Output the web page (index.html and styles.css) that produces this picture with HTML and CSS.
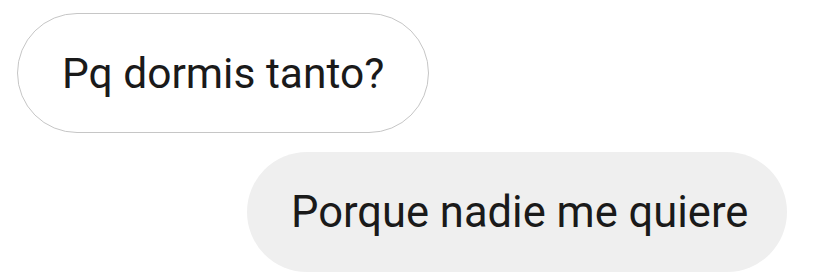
FILE: index.html
```html
<!DOCTYPE html>
<html>
<head>
  <title>Chat</title>
  <link rel="stylesheet" href="styles.css">
</head>
<body>
  <div class="chat">
    <div class="bubble received">Pq dormis tanto?</div>
    <div class="bubble sent">Porque nadie me quiere</div>
  </div>
</body>
</html>
```
FILE: styles.css
```css
body {
  margin: 0;
  background-color: #ffffff;
  font-family: Roboto, "Noto Sans", sans-serif;
}
.chat {
  display: flex;
  flex-direction: column;
  padding: 13px 40px 0 17px;
  gap: 19px;
}
.bubble {
  box-sizing: border-box;
  height: 120px;
  display: flex;
  align-items: center;
  border-radius: 60px;
  color: #1a1a1a;
  white-space: nowrap;
}
.received {
  align-self: flex-start;
  width: 412px;
  padding-left: 44px;
  font-size: 42.5px;
  border: 1px solid #c6c6c6;
  background-color: #ffffff;
}
.sent {
  align-self: flex-end;
  width: 540px;
  padding-left: 44px;
  font-size: 43.5px;
  background-color: #efefef;
}
```
